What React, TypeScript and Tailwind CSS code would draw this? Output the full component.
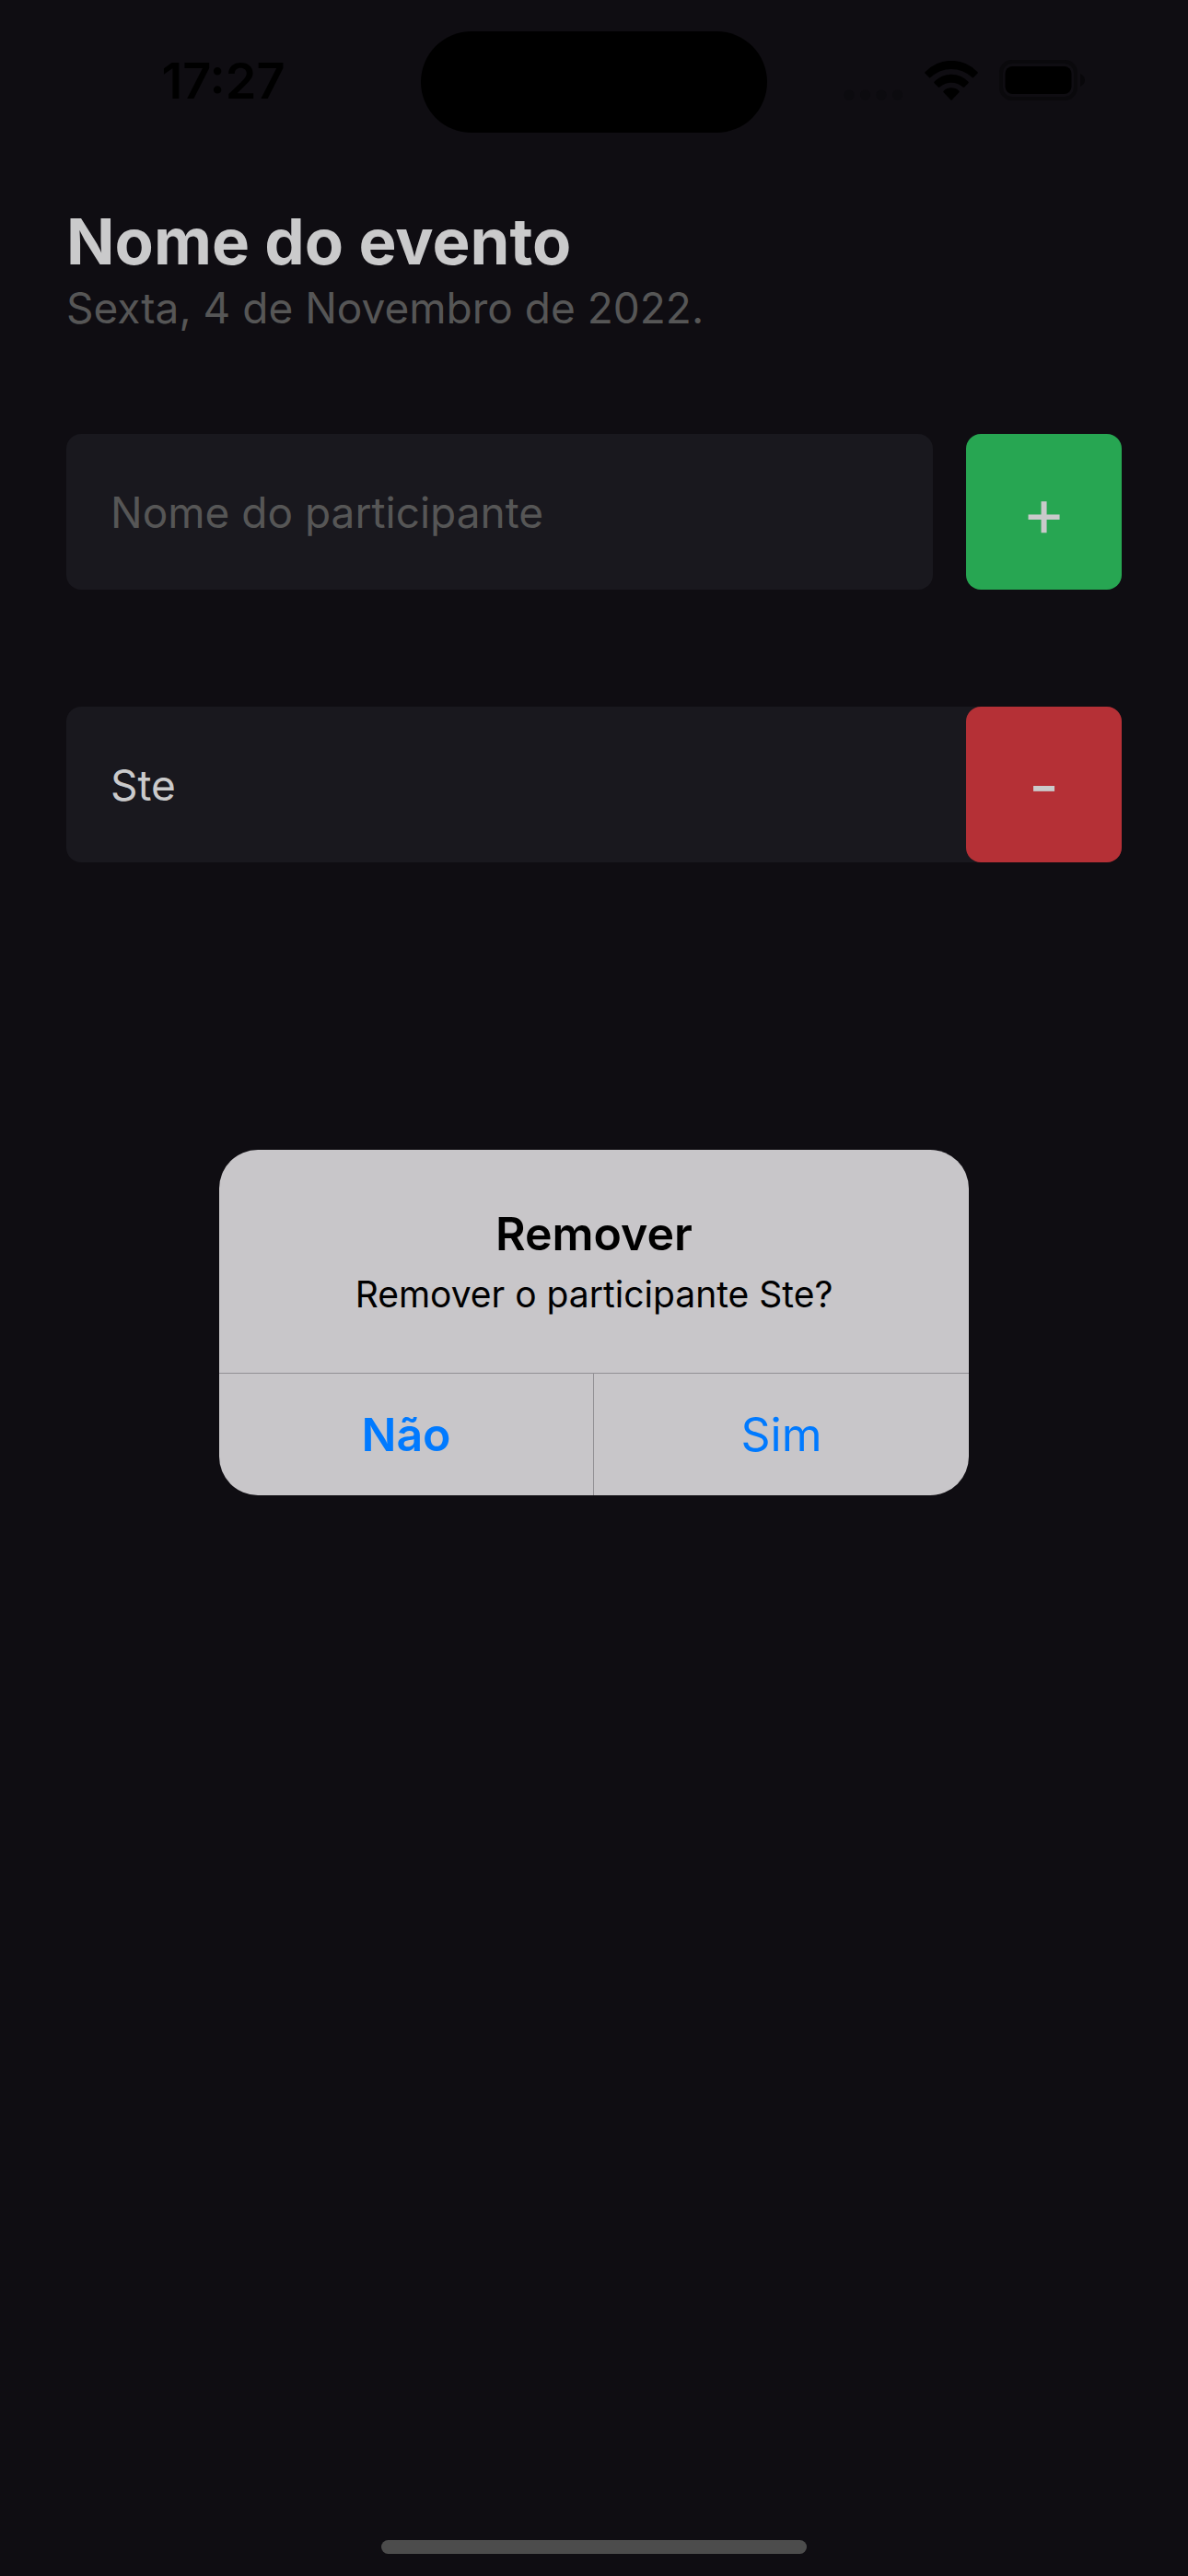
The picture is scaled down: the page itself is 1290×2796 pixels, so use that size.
import { useState } from "react";

function StatusBar() {
  return (
    <header className="grid grid-cols-[1fr_auto_1fr] items-center px-7 pt-[34px] text-black">
      <time className="pb-0.5 text-center text-[54px] leading-[60px] font-semibold">17:27</time>
      <div className="h-[110px] w-[376px] rounded-full bg-black" />
      <div className="flex items-center justify-center gap-6 pb-1">
        <svg viewBox="0 0 64 43" className="h-[43px] w-16" fill="#0c0b0f" aria-hidden="true">
          <circle cx="6" cy="37" r="5.5" />
          <circle cx="23.5" cy="37" r="5.5" />
          <circle cx="41" cy="37" r="5.5" />
          <circle cx="58.5" cy="37" r="5.5" />
        </svg>
        <svg viewBox="0 0 173 128" className="h-[43px] w-[58px]" fill="currentColor" aria-hidden="true">
          <path d="M2 36 A116 116 0 0 1 171 36 Q174 39 171 41 L158 54 Q156 56 153 53 A97 97 0 0 0 20 53 Q17 56 15 54 L2 41 Q-1 39 2 36Z" />
          <path d="M32 67 A75 75 0 0 1 141 67 Q144 70 141 73 L129 85 Q127 87 124 85 A56 56 0 0 0 49 85 Q46 87 44 85 L32 73 Q29 70 32 67Z" />
          <path d="M62 97 A36 36 0 0 1 111 97 Q114 100 111 103 L89 126 Q86.500 129 84 126 L62 103 Q59 100 62 97Z" />
        </svg>
        <svg viewBox="1 0 94 44" className="h-11 w-[94px] overflow-visible" aria-hidden="true">
          <rect x="2" y="2" width="81" height="40" rx="12" fill="none" stroke="#0a090c" strokeWidth="4" />
          <rect x="6.5" y="7" width="72" height="30" rx="8" fill="#000" />
          <path d="M88 15 Q93 18 93 22 Q93 26 88 29Z" fill="#08070a" />
        </svg>
      </div>
    </header>
  );
}

function RemoveDialog({ name, onClose, onConfirm }: { name: string; onClose: () => void; onConfirm: () => void }) {
  return (
    <div className="absolute inset-0 flex items-center justify-center pt-[75px]">
      <div
        role="alertdialog"
        aria-labelledby="dialog-title"
        aria-describedby="dialog-message"
        className="w-[814px] max-w-full overflow-hidden rounded-[42px] bg-[#c8c6c9] text-center text-black"
      >
        <div className="px-12 pt-[61px] pb-[61px]">
          <h2 id="dialog-title" className="text-[50px] leading-[60px] font-semibold">Remover</h2>
          <p id="dialog-message" className="mt-3 text-[39px] leading-[48px]">Remover o participante {name}?</p>
        </div>
        <div className="grid grid-cols-2 border-t border-[#929094] text-[50px] leading-[60px] text-[#007aff]">
          <button type="button" onClick={onClose} className="h-[132px] border-r border-[#929094] font-semibold">Não</button>
          <button type="button" onClick={onConfirm} className="h-[132px]">Sim</button>
        </div>
      </div>
    </div>
  );
}

export default function App() {
  const [participants, setParticipants] = useState(["Ste"]);
  const [draft, setDraft] = useState("");
  const [removing, setRemoving] = useState<string | null>("Ste");

  const add = () => {
    const name = draft.trim();
    if (!name || participants.includes(name)) return;
    setParticipants([...participants, name]);
    setDraft("");
  };

  return (
    <div className="relative flex min-h-screen flex-col bg-[#0f0d12] font-['Inter',sans-serif] text-[#cacacb]">
      <StatusBar />
      <main className="px-[72px] pt-[76px]">
        <h1 className="text-[69px] leading-[84px] font-bold">Nome do evento</h1>
        <p className="text-[46px] leading-[60px] text-[#565656]">Sexta, 4 de Novembro de 2022.</p>
        <form
          className="mt-[107px] flex gap-9"
          onSubmit={(e) => {
            e.preventDefault();
            add();
          }}
        >
          <input
            type="text"
            aria-label="Nome do participante"
            placeholder="Nome do participante"
            value={draft}
            onChange={(e) => setDraft(e.target.value)}
            className="h-[169px] min-w-0 flex-1 rounded-2xl bg-[#19181e] px-12 text-[46px] outline-none placeholder:text-[#565656]"
          />
          <button type="submit" aria-label="Adicionar" className="size-[169px] rounded-2xl bg-[#27a652] text-[72px]">
            +
          </button>
        </form>
        <ul className="mt-[127px] flex flex-col gap-8">
          {participants.map((name) => (
            <li key={name} className="flex items-center rounded-2xl bg-[#19181e]">
              <span className="flex-1 px-12 text-[46px] leading-[60px]">{name}</span>
              <button
                type="button"
                aria-label={`Remover ${name}`}
                onClick={() => setRemoving(name)}
                className="size-[169px] rounded-2xl bg-[#b53036] text-[72px]"
              >
                -
              </button>
            </li>
          ))}
        </ul>
      </main>
      <div className="mx-auto mt-auto mb-6 h-[15px] w-[462px] rounded-full bg-[#4c4c4c]" />
      {removing !== null && (
        <RemoveDialog
          name={removing}
          onClose={() => setRemoving(null)}
          onConfirm={() => {
            setParticipants(participants.filter((p) => p !== removing));
            setRemoving(null);
          }}
        />
      )}
    </div>
  );
}
